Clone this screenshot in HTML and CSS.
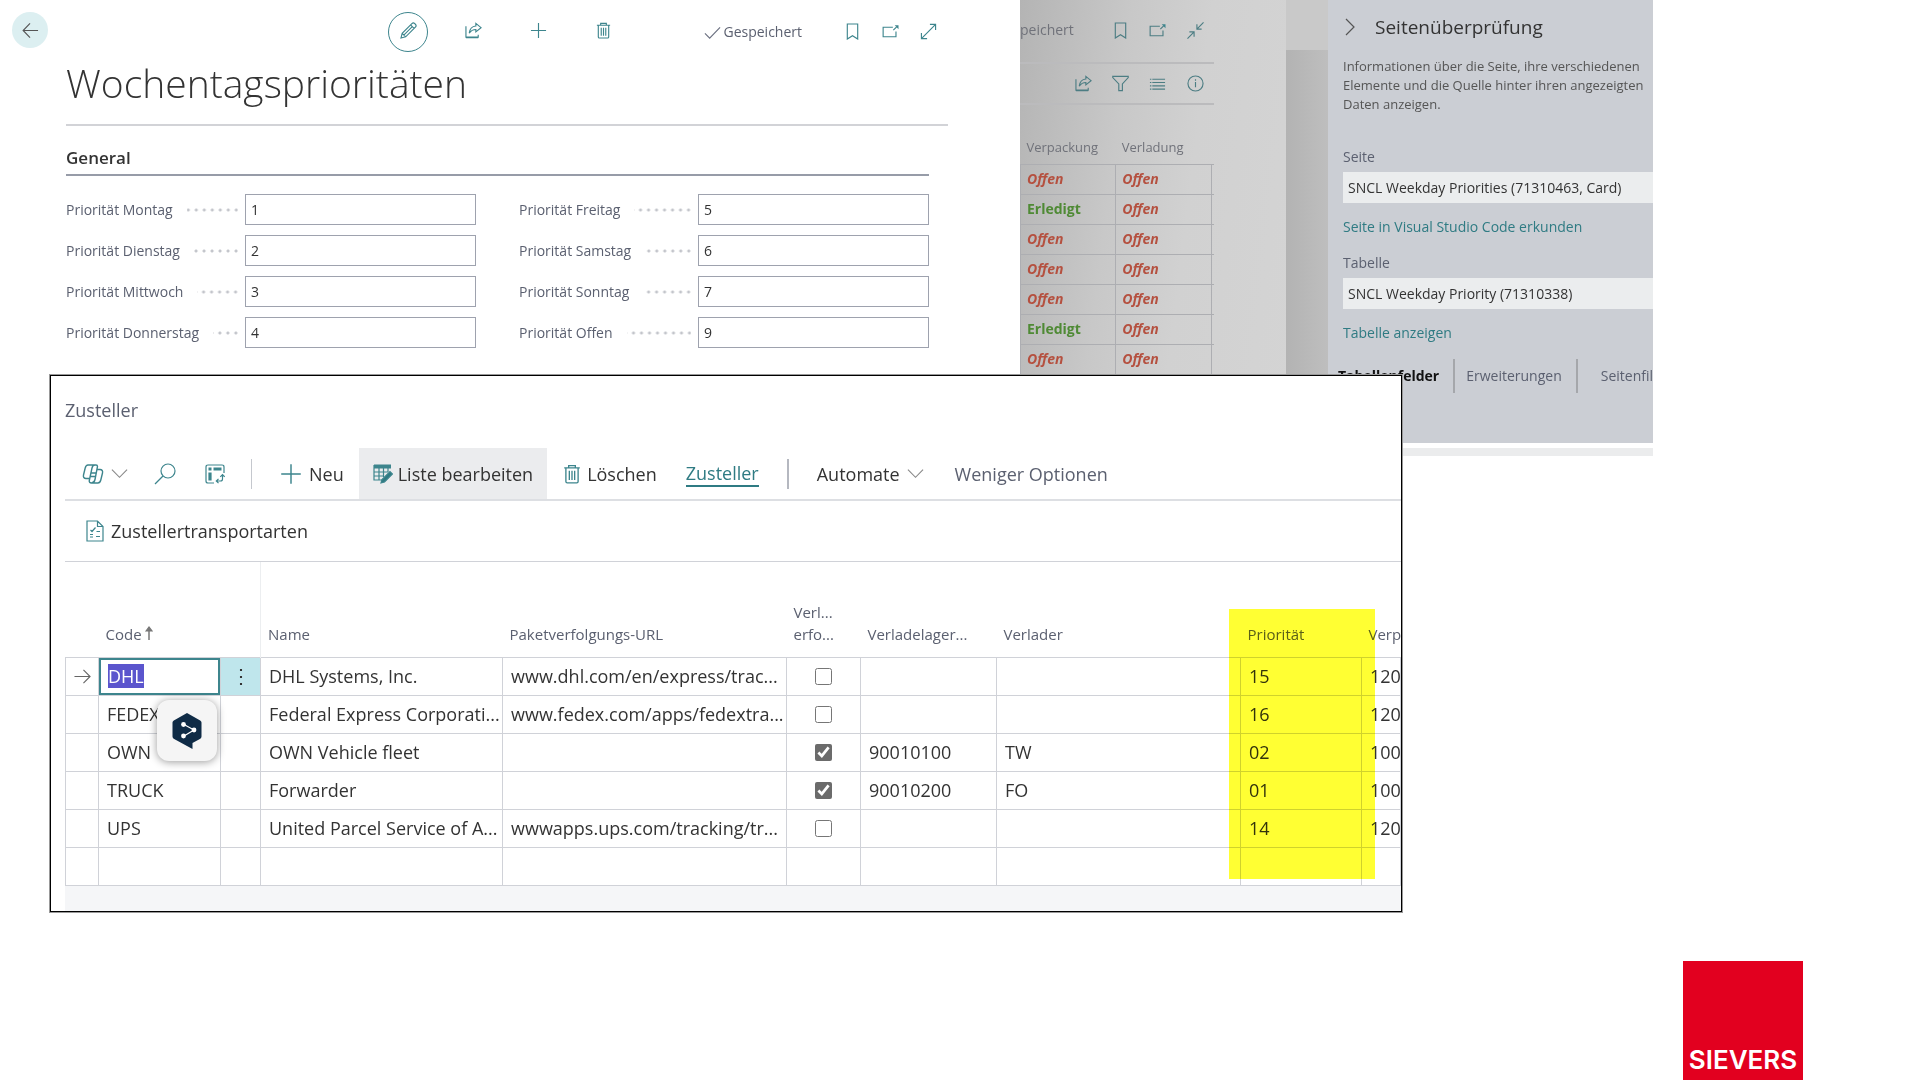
FILE: index.html
```html
<!DOCTYPE html>
<html lang="de">
<head>
    <meta charset="UTF-8">
    <meta name="viewport" content="width=device-width, initial-scale=1.0">
    <title>Wochentagsprioritäten</title>
    <link rel="stylesheet" href="styles.css">
</head>
<body>
    <!-- Icons -->
    <svg class="sprite" aria-hidden="true">
        <symbol id="i-back" viewBox="0 0 18 18"><path d="M17 9H1.5M8.5 1.5 1.2 9l7.3 7.5"/></symbol>
        <symbol id="i-edit" viewBox="0 0 18 18"><path d="M1 17l1.3-5L12.6 1.7c.8-.8 2.2-.8 3 0l.7.7c.8.8.8 2.2 0 3L6 15.7zM2.3 12 6 15.7M11.2 3.1l3.7 3.7M4 13.8l9-9"/></symbol>
        <symbol id="i-share" viewBox="0 0 18 18"><path d="M1 4.500v11.500h13v-2.500M11.500 1.500l5.500 4.500-5.500 4.500V8C8.500 8 6.500 9 4.500 11.800 5 7.500 7.500 4.500 11.500 4.200zM1 16.500h13" /></symbol>
        <symbol id="i-plus" viewBox="0 0 18 18"><path d="M9 1v16M1 9h16"/></symbol>
        <symbol id="i-trash" viewBox="0 0 18 18"><path d="M2 3.5h14M6 3.5v-2h6v2M3.500 3.500v12.300c0 .7.5 1.200 1.200 1.200h8.600c.7 0 1.200-.5 1.200-1.200V3.500M6.600 6v8.500M9 6v8.500M11.400 6v8.500"/></symbol>
        <symbol id="i-check" viewBox="0 0 18 18"><path d="M1 10l5 5L17 3.5"/></symbol>
        <symbol id="i-bookmark" viewBox="0 0 18 18"><path d="M3.5 1h11v16L9 13.500 3.500 17z"/></symbol>
        <symbol id="i-popout" viewBox="0 0 18 18"><path d="M11.500 4.500H1.200v10h13.600V9M12 7.500l3.500-3.500"/><path d="M13.500 2.500h4v4z" fill="#3d858d" stroke="none"/></symbol>
        <symbol id="i-expand" viewBox="0 0 18 18"><path d="M1.500 16.500l15-15M10.500 1.500h6v6M1.500 10.500v6h6"/></symbol>
        <symbol id="i-shrink" viewBox="0 0 18 18"><path d="M17.500.500l-7 7M10.500 2.500v5h5M.500 17.500l7-7M2.500 10.500h5v5"/></symbol>
        <symbol id="i-filter" viewBox="0 0 18 18"><path d="M.800 1.500h16.400v1.300L11 9.500v7H7.200v-7L.800 2.800z"/></symbol>
        <symbol id="i-list" viewBox="0 0 18 18"><path d="M1 4.500h1.500M3.500 4.500h13.500M1 8h1.500M3.500 8h13.500M1 11.500h1.500M3.500 11.500h13.500M1 15h1.500M3.500 15h13.500"/></symbol>
        <symbol id="i-info" viewBox="0 0 18 18"><circle cx="9" cy="9" r="8"/><path d="M9 7.500v5.500M9 4.500v1.500"/></symbol>
        <symbol id="i-right" viewBox="0 0 10 18"><path d="M1 1l8 8-8 8"/></symbol>
        <symbol id="i-down" viewBox="0 0 18 18"><path d="M1 5l8 8 8-8"/></symbol>
        <symbol id="i-copilot" viewBox="0 0 22 20"><path d="M6 1h8c1 0 1.500.6 1.500 1.500L13 15.500c-.4 2-1.500 3.500-3.500 3.500-1.800 0-2.500-1-2.200-2.500L10 4c.4-1.800 1.200-3 3-3M8 14.500H4c-2 0-3-1.500-2.500-3.500l1.700-7C3.700 2 4.500 1 6 1M14.800 5.500H18c2 0 3 1.500 2.500 3.500l-1.700 7c-.5 2-1.500 3-3 3H9.500M9 9h5.500M8.300 12.500h5.500" stroke-width="1.400"/></symbol>
        <symbol id="i-search" viewBox="0 0 22 22"><circle cx="14" cy="8" r="7"/><path d="M9 13l-8 8"/></symbol>
        <symbol id="i-analyze" viewBox="0 0 20 20"><path d="M19 9V3q0-2-2-2H3Q1 1 1 3v14q0 2 2 2h6"/><path d="M3.500 5h3M8.500 5h8M5 8.500v8" stroke-width="3.200"/><path d="M17.500 11v4q0 2-2 2h-4M13.500 14.800 11.300 17l2.200 2.200M15.300 12.800l2.200-2.200 2.200 2.200"/></symbol>
        <symbol id="i-editlist" viewBox="0 0 20 20"><path d="M1 2.500h17" stroke-width="4"/><path d="M1 1v15h8M1 8h14M1 12h10M6 3v13M10.500 3v10M15 3v5"/><path d="M8 19l1-3.500 8-8 2.500 2.500-8 8z" fill="#2f7b83"/></symbol>
        <symbol id="i-doc" viewBox="0 0 18 22"><path d="M1 1h10.500L17 6.500V21H1zM11.500 1v5.500H17M4.500 10l1.500 1.500 3.500-4M10.500 11.500h3.500M4 14.500h3M4 17h3M10 16.500h4"/></symbol>
        <symbol id="i-arrow" viewBox="0 0 18 18"><path d="M.500 9h16.500M10 2l7 7-7 7"/></symbol>
        <symbol id="i-up" viewBox="0 0 8 14"><path d="M4 14V4" stroke-width="1.500"/><path d="M1 5l3-4 3 4z" fill="#777"/></symbol>
        <symbol id="i-deepl" viewBox="0 0 30 36"><path d="M15 0l13.200 7.400Q29.500 8.200 29.500 9.500v14q0 1.400-1.200 2.200L20.500 30v6L1.700 25.700Q.500 25 .500 23.500v-14Q.500 8.200 1.800 7.400z" fill="#0f2b46" stroke="none"/><path d="M12 11.500l10 5.500-10 6" stroke="#fff" stroke-width="1.200"/><g fill="#fff" stroke="none"><circle cx="11.500" cy="11.500" r="2.400"/><circle cx="22" cy="17" r="2.400"/><circle cx="11.500" cy="23" r="2.400"/></g></symbol>
    </svg>

    <div class="backdrop">
        <main class="card">
            <div class="card-bar">
                <button class="back-btn" aria-label="Zurück"><svg class="icon"><use href="#i-back"/></svg></button>
                <div class="card-tools">
                    <button class="tool-btn tool-btn-active" aria-label="Bearbeiten"><svg class="icon"><use href="#i-edit"/></svg></button>
                    <button class="tool-btn" aria-label="Teilen"><svg class="icon"><use href="#i-share"/></svg></button>
                    <button class="tool-btn" aria-label="Neu"><svg class="icon"><use href="#i-plus"/></svg></button>
                    <button class="tool-btn" aria-label="Löschen"><svg class="icon"><use href="#i-trash"/></svg></button>
                </div>
                <span class="saved"><svg class="icon"><use href="#i-check"/></svg>Gespeichert</span>
                <div class="window-tools">
                    <button class="win-btn" aria-label="Lesezeichen"><svg class="icon"><use href="#i-bookmark"/></svg></button>
                    <button class="win-btn" aria-label="Neues Fenster"><svg class="icon"><use href="#i-popout"/></svg></button>
                    <button class="win-btn" aria-label="Vergrößern"><svg class="icon"><use href="#i-expand"/></svg></button>
                </div>
            </div>
            <h1>Wochentagsprioritäten</h1>
            <section class="general">
                <h2>General</h2>
                <form class="fields">
                    <div class="field"><label for="mo">Priorität Montag</label><input id="mo" type="text" value="1"></div>
                    <div class="field"><label for="di">Priorität Dienstag</label><input id="di" type="text" value="2"></div>
                    <div class="field"><label for="mi">Priorität Mittwoch</label><input id="mi" type="text" value="3"></div>
                    <div class="field"><label for="do">Priorität Donnerstag</label><input id="do" type="text" value="4"></div>
                    <div class="field"><label for="fr">Priorität Freitag</label><input id="fr" type="text" value="5"></div>
                    <div class="field"><label for="sa">Priorität Samstag</label><input id="sa" type="text" value="6"></div>
                    <div class="field"><label for="so">Priorität Sonntag</label><input id="so" type="text" value="7"></div>
                    <div class="field"><label for="of">Priorität Offen</label><input id="of" type="text" value="9"></div>
                </form>
            </section>
        </main>

        <div class="dimmed">
            <div class="dimmed-bar">
                <span class="dimmed-saved">peichert</span>
                <button class="win-btn" aria-label="Lesezeichen"><svg class="icon"><use href="#i-bookmark"/></svg></button>
                <button class="win-btn" aria-label="Neues Fenster"><svg class="icon"><use href="#i-popout"/></svg></button>
                <button class="win-btn" aria-label="Verkleinern"><svg class="icon"><use href="#i-shrink"/></svg></button>
            </div>
            <div class="dimmed-bar dimmed-actions">
                <button class="win-btn" aria-label="Teilen"><svg class="icon"><use href="#i-share"/></svg></button>
                <button class="win-btn" aria-label="Filter"><svg class="icon"><use href="#i-filter"/></svg></button>
                <button class="win-btn" aria-label="Liste"><svg class="icon"><use href="#i-list"/></svg></button>
                <button class="win-btn" aria-label="Info"><svg class="icon"><use href="#i-info"/></svg></button>
            </div>
            <table class="status-table">
                <thead>
                    <tr><th>Verpackung</th><th>Verladung</th><th class="edge"></th></tr>
                </thead>
                <tbody>
                    <tr><td class="open">Offen</td><td class="open">Offen</td><td></td></tr>
                    <tr><td class="done">Erledigt</td><td class="open">Offen</td><td></td></tr>
                    <tr><td class="open">Offen</td><td class="open">Offen</td><td></td></tr>
                    <tr><td class="open">Offen</td><td class="open">Offen</td><td></td></tr>
                    <tr><td class="open">Offen</td><td class="open">Offen</td><td></td></tr>
                    <tr><td class="done">Erledigt</td><td class="open">Offen</td><td></td></tr>
                    <tr><td class="open">Offen</td><td class="open">Offen</td><td></td></tr>
                </tbody>
            </table>
        </div>

        <div class="gutter"></div>

        <aside class="inspector">
            <div class="inspector-body">
                <div class="inspector-head">
                    <button class="collapse-btn" aria-label="Schließen"><svg class="icon"><use href="#i-right"/></svg></button>
                    <h2>Seitenüberprüfung</h2>
                </div>
                <p>Informationen über die Seite, ihre verschiedenen<br>Elemente und die Quelle hinter ihren angezeigten<br>Daten anzeigen.</p>
                <label for="seite">Seite</label>
                <input id="seite" type="text" readonly value="SNCL Weekday Priorities (71310463, Card)">
                <a href="#">Seite in Visual Studio Code erkunden</a>
                <label for="tabelle">Tabelle</label>
                <input id="tabelle" type="text" readonly value="SNCL Weekday Priority (71310338)">
                <a href="#">Tabelle anzeigen</a>
                <div class="tabs">
                    <button class="tab tab-active">Tabellenfelder</button>
                    <button class="tab">Erweiterungen</button>
                    <button class="tab">Seitenfilter</button>
                </div>
            </div>
            <div class="scroll-strip"></div>
        </aside>
    </div>

    <section class="list-window">
        <div class="list-content">
            <h2>Zusteller</h2>
            <div class="actions">
                <button class="act act-copilot" aria-label="Copilot"><svg class="icon icon-lg"><use href="#i-copilot"/></svg><svg class="icon grey"><use href="#i-down"/></svg></button>
                <button class="act act-search" aria-label="Suchen"><svg class="icon icon-lg"><use href="#i-search"/></svg></button>
                <button class="act act-analyze" aria-label="Analysieren"><svg class="icon icon-md"><use href="#i-analyze"/></svg></button>
                <span class="sep"></span>
                <button class="act act-new"><svg class="icon icon-lg"><use href="#i-plus"/></svg>Neu</button>
                <button class="act act-edit"><svg class="icon icon-md"><use href="#i-editlist"/></svg>Liste bearbeiten</button>
                <button class="act act-delete"><svg class="icon icon-md"><use href="#i-trash"/></svg>Löschen</button>
                <a class="act-link" href="#">Zusteller</a>
                <span class="sep sep-dark"></span>
                <button class="act act-automate">Automate<svg class="icon grey"><use href="#i-down"/></svg></button>
                <button class="act act-less">Weniger Optionen</button>
            </div>
            <div class="subactions">
                <button class="act"><svg class="icon icon-doc"><use href="#i-doc"/></svg>Zustellertransportarten</button>
            </div>
            <table class="list">
                <colgroup>
                    <col class="c-mark"><col class="c-code"><col class="c-more"><col class="c-name"><col class="c-url"><col class="c-check"><col class="c-stock"><col class="c-carrier"><col class="c-prio"><col>
                </colgroup>
                <thead>
                    <tr>
                        <th></th>
                        <th>Code <svg class="icon sort"><use href="#i-up"/></svg></th>
                        <th class="frozen"></th>
                        <th>Name</th>
                        <th>Paketverfolgungs-URL</th>
                        <th>Verl...<br>erfo...</th>
                        <th>Verladelager...</th>
                        <th>Verlader</th>
                        <th>Priorität</th>
                        <th>Verpackung</th>
                    </tr>
                </thead>
                <tbody>
                    <tr>
                        <td class="mark"><svg class="icon"><use href="#i-arrow"/></svg></td>
                        <td class="editing"><input id="code" type="text" value="DHL" aria-label="Code"></td>
                        <td class="more"><button aria-label="Mehr Optionen">⋮</button></td>
                        <td>DHL Systems, Inc.</td>
                        <td>www.dhl.com/en/express/trac...</td>
                        <td class="check"><input type="checkbox" aria-label="Verladung erforderlich"></td>
                        <td></td><td></td><td>15</td><td>120</td>
                    </tr>
                    <tr>
                        <td></td><td>FEDEX</td><td></td>
                        <td>Federal Express Corporati...</td>
                        <td>www.fedex.com/apps/fedextra...</td>
                        <td class="check"><input type="checkbox" aria-label="Verladung erforderlich"></td>
                        <td></td><td></td><td>16</td><td>120</td>
                    </tr>
                    <tr>
                        <td></td><td>OWN</td><td></td>
                        <td>OWN Vehicle fleet</td>
                        <td></td>
                        <td class="check"><input type="checkbox" checked aria-label="Verladung erforderlich"></td>
                        <td>90010100</td><td>TW</td><td>02</td><td>100</td>
                    </tr>
                    <tr>
                        <td></td><td>TRUCK</td><td></td>
                        <td>Forwarder</td>
                        <td></td>
                        <td class="check"><input type="checkbox" checked aria-label="Verladung erforderlich"></td>
                        <td>90010200</td><td>FO</td><td>01</td><td>100</td>
                    </tr>
                    <tr>
                        <td></td><td>UPS</td><td></td>
                        <td>United Parcel Service of A...</td>
                        <td>wwwapps.ups.com/tracking/tr...</td>
                        <td class="check"><input type="checkbox" aria-label="Verladung erforderlich"></td>
                        <td></td><td></td><td>14</td><td>120</td>
                    </tr>
                    <tr>
                        <td></td><td></td><td></td><td></td><td></td><td></td><td></td><td></td><td></td><td></td>
                    </tr>
                </tbody>
            </table>
            <div class="list-footer"></div>
        </div>
        <div class="marker"></div>
        <button class="deepl" aria-label="Übersetzen"><svg class="icon"><use href="#i-deepl"/></svg></button>
    </section>

    <div class="logo">SIEVERS</div>

    <script>
        // Code-Feld der ersten Zeile ist beim Öffnen markiert
        const code = document.getElementById('code');
        code.focus();
        code.select();
    </script>
</body>
</html>
```

FILE: styles.css
```css
* {
    margin: 0;
    padding: 0;
    box-sizing: border-box;
}

body {
    position: relative;
    min-height: 100vh;
    background: #fff;
    color: #333;
    font: 14px/20px "Open Sans", "Noto Sans", sans-serif;
    overflow: hidden;
}

button,
input {
    font: inherit;
    color: inherit;
    border: none;
    border-radius: 0;
    background: none;
    outline: none;
}

a {
    color: #2f7b83;
    text-decoration: none;
}

.sprite {
    position: absolute;
    width: 0;
    height: 0;
}

.icon {
    width: 17px;
    height: 17px;
    flex: none;
    fill: none;
    stroke: #3d858d;
    stroke-width: 1.2;
}

.icon-md {
    width: 20px;
    height: 20px;
}

.icon-lg {
    width: 22px;
    height: 22px;
}

.grey {
    stroke: #888;
}

.backdrop {
    display: grid;
    grid-template-columns: 1020fr 266fr 42fr 325fr 267fr;
}

/* Karte */
.card-bar {
    display: flex;
    align-items: center;
    padding: 12px 73px 0 12px;
    height: 52px;
}

.back-btn {
    display: grid;
    place-items: center;
    align-self: flex-start;
    width: 36px;
    height: 36px;
    border-radius: 50%;
    background: #dceff1;
}

.back-btn .icon {
    stroke: #555;
}

.card-tools {
    display: flex;
    gap: 25px;
    margin-left: 340px;
}

.tool-btn {
    display: grid;
    place-items: center;
    width: 40px;
    height: 40px;
    border: 1px solid transparent;
    border-radius: 50%;
    padding-bottom: 4px;
}

.tool-btn-active {
    border-color: #3d858d;
}

.saved {
    display: flex;
    align-items: center;
    gap: 2px;
    margin-left: auto;
    margin-right: 31px;
    color: #5b6070;
}

.saved .icon {
    stroke: #6b7080;
}

.window-tools {
    display: flex;
    padding-bottom: 2px;
}

.win-btn {
    display: grid;
    place-items: center;
    width: 38px;
    height: 36px;
}

h1 {
    margin: 0 72px 0 66px;
    padding: 1px 0 11px;
    border-bottom: 2px solid #d2d3d7;
    font-size: 39px;
    line-height: 60px;
    font-weight: 300;
}

.general {
    margin: 0 91px 0 66px;
    padding-top: 20px;
}

.general h2 {
    padding-bottom: 4px;
    border-bottom: 2px solid #979ca8;
    font-size: 17px;
    line-height: 24px;
    font-weight: 600;
}

.fields {
    display: grid;
    grid-template-columns: 1fr 1fr;
    grid-template-rows: repeat(4, 31px);
    grid-auto-flow: column;
    gap: 10px 43px;
    margin-top: 18px;
}

.field {
    display: flex;
    align-items: center;
}

.field label {
    display: flex;
    flex: 0 0 179px;
    color: #5b6070;
}

/* Punktlinie bis zum Feld */
.field label::after {
    content: "";
    flex: 1;
    margin: 0 7px 0 14px;
    background: radial-gradient(circle at 6px 50%, #c3c5cb 1px, transparent 2px) right center / 8px 4px repeat-x;
}

.field input {
    flex: 1;
    min-width: 0;
    height: 31px;
    padding: 0 5px;
    border: 1px solid #9ea2ae;
}

/* Abgedunkelte Liste */
.dimmed {
    padding: 12px 72px 0 0;
    background: linear-gradient(97deg, #b4b4b4, #c8c8c8 35%, #d1d1d1 60%, #d4d4d4);
}

.dimmed-bar {
    display: flex;
    justify-content: flex-end;
    align-items: center;
    height: 52px;
    padding-bottom: 14px;
    border-bottom: 2px solid #bbbbbd;
}

.dimmed-bar .icon {
    stroke: #4c7d83;
}

.dimmed-bar .win-btn {
    margin-left: -1px;
}

.dimmed-bar .win-btn:last-child {
    margin-left: 0;
}

.dimmed-saved {
    margin-right: auto;
    color: #70727a;
}

.dimmed-actions {
    height: 41px;
    padding-bottom: 1px;
}

.status-table {
    width: 100%;
    border-collapse: collapse;
    table-layout: fixed;
}

.status-table th {
    height: 59px;
    padding: 0 0 7px 6px;
    color: #70727a;
    font-size: 13px;
    font-weight: 400;
    text-align: left;
    vertical-align: bottom;
}

.status-table .edge {
    width: 3px;
    padding: 0;
}

.status-table td {
    height: 30px;
    padding-left: 6px;
    border: 1px solid #adaeb2;
    font-weight: 700;
}

.status-table td:last-child {
    padding: 0;
    border-right: none;
}

.open {
    color: #b5503f;
    font-style: italic;
}

.done {
    color: #4f8a35;
}

.gutter {
    border-top: 50px solid #c9c9c9;
    background: linear-gradient(90deg, #b3b3b3, #bebebe);
    height: 443px;
}

/* Seitenüberprüfung */
.inspector {
    min-width: 0;
    overflow: hidden;
}

.inspector-body {
    height: 443px;
    padding: 11px 0 0 15px;
    background: #cbced4;
    overflow: hidden;
    white-space: nowrap;
}

.inspector-head {
    display: flex;
    align-items: center;
    gap: 20px;
    height: 32px;
}

.collapse-btn {
    display: grid;
    margin-left: 2px;
}

.collapse-btn .icon {
    width: 10px;
    height: 18px;
    stroke: #555;
}

.inspector h2 {
    font-size: 19px;
    line-height: 28px;
    font-weight: 400;
}

.inspector p {
    margin: 14px 0 33px;
    font-size: 13px;
    line-height: 19px;
    color: #555;
}

.inspector label {
    display: block;
    color: #5b6070;
    margin-bottom: 5px;
}

.inspector input {
    display: block;
    width: 100%;
    height: 31px;
    padding: 0 5px;
    background: #ebedee;
}

.inspector a {
    display: block;
    margin: 14px 0 16px;
}

.tabs {
    display: flex;
    align-items: center;
    margin-left: -5px;
}

.tab {
    height: 34px;
    padding: 0 14px 0 11px;
    border-right: 2px solid #a5a7ab;
    color: #5b6070;
}

.tab:first-child {
    padding-left: 0;
}

.tab:last-child {
    padding-left: 23px;
    border: none;
}

.tab-active {
    color: #111;
    font-weight: 700;
}

.scroll-strip {
    height: 8px;
    margin-top: 5px;
    background: #ebeced;
}

/* Zusteller */
.list-window {
    position: absolute;
    top: 375px;
    left: 50px;
    right: 518px;
    border: 1px solid #000;
    outline: 1px solid #999;
    background: #fff;
    font-size: 18px;
}

.list-content {
    padding: 22px 0 0 14px;
    overflow: hidden;
}

.list-window h2 {
    color: #5b6070;
    font-size: 18px;
    line-height: 24px;
    font-weight: 400;
}

.actions {
    display: flex;
    align-items: center;
    height: 53px;
    margin-top: 26px;
    border-bottom: 2px solid #dddfe3;
    white-space: nowrap;
}

.act {
    display: flex;
    align-items: center;
    gap: 7px;
}

.act-copilot {
    margin-left: 17px;
}

.act-search {
    margin-left: 26px;
}

.act-analyze {
    margin-left: 29px;
}

.sep {
    width: 1px;
    height: 30px;
    margin: 0 28px 0 26px;
    background: #c5c8ce;
}

.sep-dark {
    width: 2px;
    margin: 0 28px;
    background: #b5b8c0;
}

.act-edit {
    align-self: stretch;
    gap: 5px;
    margin: 0 15px;
    padding: 0 14px;
    background: #ebecee;
}

.act-delete {
    gap: 5px;
}

.act-link {
    margin-left: 29px;
    border-bottom: 2px solid #2f7b83;
    line-height: 24px;
}

.act-less {
    margin-left: 31px;
    color: #5b6070;
}

.subactions {
    display: flex;
    align-items: center;
    height: 61px;
    padding-left: 21px;
    border-bottom: 1px solid #d0d2d8;
}

.icon-doc {
    width: 18px;
    height: 22px;
}

.list {
    width: 100%;
    table-layout: fixed;
    border-collapse: collapse;
}

.c-mark { width: 33px; }
.c-code { width: 122px; }
.c-more { width: 40px; }
.c-name { width: 242px; }
.c-url { width: 284px; }
.c-check { width: 74px; }
.c-stock { width: 136px; }
.c-carrier { width: 244px; }
.c-prio { width: 121px; }

.list th {
    height: 95px;
    padding: 0 0 12px 7px;
    color: #5b6070;
    font-size: 15px;
    line-height: 22px;
    font-weight: 400;
    text-align: left;
    vertical-align: bottom;
    white-space: nowrap;
}

.list .frozen {
    border-right: 1px solid #eceef0;
}

.sort {
    width: 8px;
    height: 14px;
    stroke: #777;
}

.list td {
    height: 38px;
    padding: 0 0 0 8px;
    border: 1px solid #d0d2d8;
    white-space: nowrap;
}

.list .mark {
    line-height: 0;
}

.mark .icon {
    stroke: #666;
}

.list .editing {
    padding: 0;
}

.editing input {
    display: block;
    width: 100%;
    height: 37px;
    padding: 0 7px;
    border: 2px solid #3d858d;
}

.editing input::selection {
    background: #5b55cd;
    color: #fff;
}

.list .more {
    padding: 0;
    background: #bfe6ec;
    text-align: center;
}

.more button {
    width: 100%;
    font-size: 20px;
}

.list .check {
    padding: 0;
    text-align: center;
}

.check input {
    width: 17px;
    height: 17px;
    margin-bottom: 2px;
    vertical-align: middle;
    accent-color: #6b6b6b;
}

.list-footer {
    height: 25px;
    background: #f5f6f8;
}

/* Gelber Marker über der Spalte Priorität */
.marker {
    position: absolute;
    top: 233px;
    left: 1178px;
    width: 146px;
    height: 270px;
    background: #ffff33;
    mix-blend-mode: multiply;
}

.deepl {
    position: absolute;
    top: 324px;
    left: 106px;
    display: grid;
    place-items: center;
    width: 60px;
    height: 61px;
    border-radius: 12px;
    background: #f5f5f5;
    box-shadow: 0 1px 8px rgba(0, 0, 0, 0.4);
}

.deepl .icon {
    width: 30px;
    height: 36px;
}

.logo {
    position: absolute;
    right: 117px;
    bottom: 0;
    width: 120px;
    height: 119px;
    padding-top: 84px;
    background: #e2001f;
    color: #fff;
    font: 600 26px/30px Inter, sans-serif;
    text-align: center;
}
```
